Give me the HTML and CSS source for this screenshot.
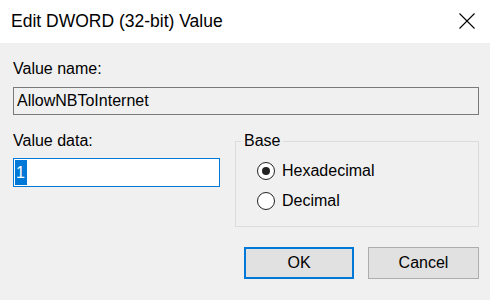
FILE: index.html
```html
<!DOCTYPE html>
<html>
<head>
  <title>Edit DWORD (32-bit) Value</title>
  <link rel="stylesheet" href="styles.css">
</head>
<body>
  <div class="dialog">
    <div class="titlebar">
      <span class="title">Edit DWORD (32-bit) Value</span>
      <svg class="close" width="16" height="16" viewBox="0 0 16 16">
        <path d="M0.5 0.5 L15.5 15.5 M15.5 0.5 L0.5 15.5" stroke="#000" stroke-width="1.1" fill="none" />
      </svg>
    </div>

    <div class="content">
      <div class="label">Value name:</div>
      <div class="textbox readonly">AllowNBToInternet</div>

      <div class="row">
        <div class="data-col">
          <div class="label">Value data:</div>
          <div class="textbox focused"><span class="selected">1</span></div>
        </div>

        <fieldset class="group">
          <legend>Base</legend>
          <div class="radios">
            <div class="radio checked"><span class="circle"></span>Hexadecimal</div>
            <div class="radio"><span class="circle"></span>Decimal</div>
          </div>
        </fieldset>
      </div>

      <div class="buttons">
        <button class="btn default">OK</button>
        <button class="btn">Cancel</button>
      </div>
    </div>
  </div>
</body>
</html>
```

FILE: styles.css
```css
:root {
  --face: #f0f0f0;
  --accent: #0078d7;
  --font: "Liberation Sans", Arial, sans-serif;
}
body {
  margin: 0;
  font-family: var(--font);
  font-size: 16px;
  line-height: 18px;
  color: #000;
  background: var(--face);
}
.dialog {
  width: 490px;
  height: 300px;
  display: flex;
  flex-direction: column;
}
.titlebar {
  height: 43px;
  background: #fff;
  display: flex;
  align-items: center;
  justify-content: space-between;
  padding: 0 15px 0 11px;
}
.title {
  font-size: 17.5px;
  margin-top: -1px;
}
.close {
  display: block;
  margin-top: -2px;
}
.content {
  padding: 17px 11px 0 13px;
}
.textbox {
  box-sizing: border-box;
  border: 1px solid #7a7a7a;
  padding: 0 3px;
}
.readonly {
  height: 28px;
  line-height: 26px;
  margin-top: 9px;
}
.row {
  display: flex;
  gap: 15px;
  margin-top: 17px;
}
.data-col {
  width: 207px;
}
.focused {
  height: 29px;
  margin-top: 8px;
  background: #fff;
  border-color: var(--accent);
  padding: 1px 0 0 1px;
}
.selected {
  display: inline-block;
  background: var(--accent);
  color: #fff;
  line-height: 25px;
  padding: 0 2px 0 1px;
}
.group {
  flex: 1;
  margin: 0;
  padding: 0;
  border: 1px solid #dcdcdc;
  height: 95px;
  box-sizing: border-box;
}
.group legend {
  margin-left: 5px;
  padding: 0 3px;
}
.radios {
  display: flex;
  flex-direction: column;
  gap: 12px;
  padding: 12px 0 0 21px;
}
.radio {
  display: flex;
  align-items: center;
  gap: 7px;
  height: 18px;
}
.circle {
  width: 18px;
  height: 18px;
  box-sizing: border-box;
  border: 1px solid #222;
  border-radius: 50%;
  background: #fff;
  display: flex;
  align-items: center;
  justify-content: center;
}
.checked .circle::after {
  content: "";
  width: 8px;
  height: 8px;
  border-radius: 50%;
  background: #222;
}
.buttons {
  display: flex;
  justify-content: flex-end;
  gap: 14px;
  margin-top: 20px;
}
.btn {
  width: 111px;
  height: 32px;
  font-family: var(--font);
  font-size: 16px;
  color: #000;
  background: #e1e1e1;
  border: 1px solid #adadad;
  padding: 0;
}
.btn.default {
  width: 110px;
  border: 2px solid var(--accent);
}
```
